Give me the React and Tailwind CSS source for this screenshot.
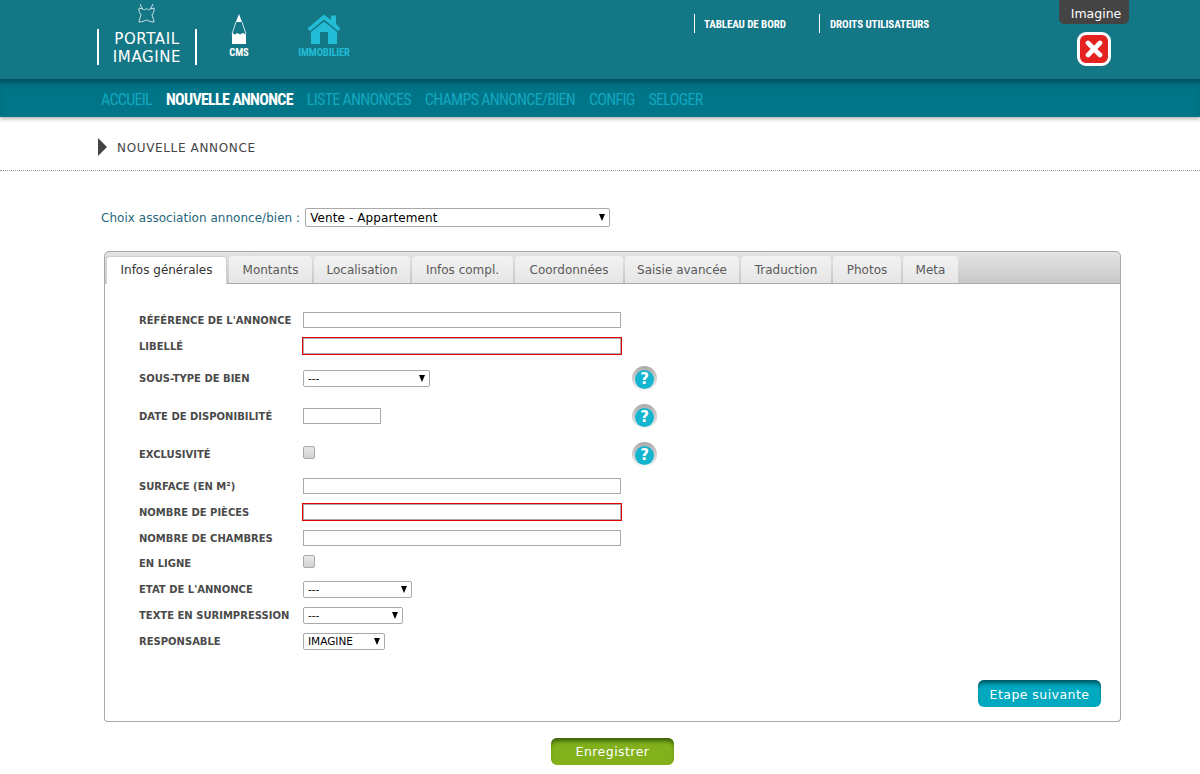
const verdana = "font-['DejaVu_Sans','Liberation_Sans',sans-serif]";

const tabs = ["Infos générales", "Montants", "Localisation", "Infos compl.", "Coordonnées", "Saisie avancée", "Traduction", "Photos", "Meta"];
const tabWidths = ["w-[121px]", "w-[83px]", "w-[96px]", "w-[101px]", "w-[108px]", "w-[114px]", "w-[90px]", "w-[68px]", "w-[55px]"];
const navItems = ["ACCUEIL", "NOUVELLE ANNONCE", "LISTE ANNONCES", "CHAMPS ANNONCE/BIEN", "CONFIG", "SELOGER"];

function Arrow() {
  return <span className="ml-auto mr-[4px] text-[0] border-x-[3.5px] border-x-transparent border-t-[7px] border-t-black" />;
}

function SelectBox({ value, width, big }) {
  return (
    <div
      className={`flex items-center bg-white border border-[#a9a9a9] rounded-[2px] text-black ${width} ${
        big ? "h-[19px] pl-[4px] text-[12px] tracking-[0.1px]" : "h-[17px] pl-[4px] text-[10.5px]"
      }`}
    >
      <span className={big ? "" : "pt-[1px]"}>{value}</span>
      <Arrow />
    </div>
  );
}

function TextInput({ error, width = "w-[318px]" }) {
  if (error) {
    return <div className="w-[320px] h-[18px] -ml-px bg-white border border-[#e60000] shadow-[inset_0_0_0_1px_#a9a9a9]" />;
  }
  return <div className={`${width} h-[16px] bg-white border border-[#a9a9a9]`} />;
}

function Checkbox() {
  return <div className="w-[12px] h-[13px] -mt-[4px] rounded-[2px] border border-[#a8a8a8] bg-gradient-to-b from-[#e8e8e8] to-[#d2d2d2]" />;
}

function HelpIcon() {
  return (
    <div className="ml-auto w-[25px] h-[25px] rounded-full bg-gradient-to-b from-[#a8a8a8] to-[#f8f8f8] flex items-center justify-center">
      <div className="w-[19px] h-[19px] mt-[2px] rounded-full bg-[#15b5cf] flex items-center justify-center text-white text-[15px] font-bold leading-none">
        ?
      </div>
    </div>
  );
}

function Row({ label, height = "h-[26px]", help, children }) {
  return (
    <div className={`flex items-center ${height}`}>
      <div className="w-[164px] text-[10px] font-bold text-[#4a4a4a]">{label}</div>
      <div className="w-[318px]">{children}</div>
      {help && <div className="w-[36px] flex"><HelpIcon /></div>}
    </div>
  );
}

function Header() {
  return (
    <header className="relative h-[79px] bg-[#147786] pl-[97px] flex font-['Roboto',sans-serif]">
      <div className="w-[100px] pt-[3px] flex flex-col items-center">
        <svg width="20" height="22" viewBox="0 0 20 22" fill="none" stroke="#cfe3e6" strokeWidth="1">
          <path d="M3 1 L5.500 6 L2 5 C1 9 4 11 4 12 C3 15 2 17 2 19 C5 19 7 18 9.500 17 C12 18 14 19 17 19 C17 17 16 15 15 12 C15 11 18 9 17 5 L13.500 6 L16 1" />
          <path d="M5.500 6 C7 7 8 7 9.500 5.500 C11 7 12 7 13.500 6" />
        </svg>
        <div className="mt-[4px] pt-[1px] w-full h-[36px] border-x-2 border-white text-center text-white text-[15px] leading-[18px] tracking-[0.6px]">
          <div className={verdana}>PORTAIL</div>
          <div className={verdana}>IMAGINE</div>
        </div>
      </div>
      <div className="ml-[32px] w-[20px] pt-[14px] flex flex-col items-center">
        <svg width="16" height="31" viewBox="0 0 16 31">
          <path d="M8 0 L11 8 L4.800 8 Z" fill="#fff" />
          <path d="M5 8 L1 20 M11 8 L15 20" stroke="#fff" strokeWidth="0.8" fill="none" />
          <path d="M1 30 L1 19 L4 20.500 L6.500 19 L9 20.500 L12 19 L15 20.500 L15 30 Z" fill="#fff" />
        </svg>
        <span className="text-[10.5px] font-bold text-white tracking-[-0.1px] [font-stretch:75%]">CMS</span>
      </div>
      <div className="ml-[47px] w-[56px] pt-[14px] flex flex-col items-center">
        <svg width="34" height="31" viewBox="0 0 34 31" fill="#22bcd6">
          <path d="M0.500 14.500 L17 0.500 L24 6 L24 1.500 L29 1.500 L29 10 L33.500 14.500 L31 17 L17 5.500 L3 17 Z" />
          <path d="M4 18 L17 7.500 L30 18 L30 30 L21 30 L21 18 L13 18 L13 30 L4 30 Z" />
        </svg>
        <span className="text-[10.5px] font-bold text-[#22bcd6] tracking-[-0.1px] whitespace-nowrap [font-stretch:75%]">IMMOBILIER</span>
      </div>
      <div className="ml-[342px] mt-[14px] h-[19px] flex">
        <div className="w-[125px] border-l border-white pl-[9px] text-[11px] font-bold leading-[22px] text-white tracking-[-0.1px] whitespace-nowrap [font-stretch:75%]">
          TABLEAU DE BORD
        </div>
        <div className="border-l border-white pl-[10px] text-[11px] font-bold leading-[22px] text-white tracking-[-0.1px] whitespace-nowrap [font-stretch:75%]">
          DROITS UTILISATEURS
        </div>
      </div>
      <div className="absolute left-[1059px] top-0 w-[70px] flex flex-col items-center">
        <div className={`w-[70px] h-[24px] pl-[4px] bg-[#444444] rounded-b-[5px] text-white text-[12.5px] leading-[28px] text-center ${verdana}`}>
          Imagine
        </div>
        <div className="mt-[8px] w-[34px] h-[34px] rounded-[9px] bg-[#e42320] border-[3px] border-white flex items-center justify-center">
          <svg width="18" height="18" viewBox="0 0 18 18" stroke="#fff" strokeWidth="4.600" strokeLinecap="round">
            <path d="M3 3 L15 15 M15 3 L3 15" />
          </svg>
        </div>
      </div>
    </header>
  );
}

function Nav() {
  return (
    <nav className="h-[38px] pl-[101px] pt-[3px] bg-[#007587] flex items-center gap-[14px] shadow-[inset_0_7px_6px_-4px_rgba(0,50,60,0.65),0_2px_4px_rgba(0,0,0,0.3)] font-['Roboto',sans-serif] text-[16px] tracking-[-0.7px] [font-stretch:75%]">
      {navItems.map((item) => (
        <a key={item} className={item === "NOUVELLE ANNONCE" ? "text-white font-bold whitespace-nowrap" : "text-[#13a7c0] whitespace-nowrap"}>
          {item}
        </a>
      ))}
    </nav>
  );
}

export default function App() {
  return (
    <div className={`w-[1200px] h-[774px] overflow-hidden bg-white ${verdana}`}>
      <Header />
      <Nav />
      <div className="h-[54px] pl-[98px] flex items-center border-b border-dotted border-[#999999] pt-[6px]">
        <span className="border-y-[9px] border-y-transparent border-l-[9px] border-l-[#444444]" />
        <h1 className="ml-[10px] pt-[3px] text-[12px] text-[#444444] tracking-[0.65px] font-normal">NOUVELLE ANNONCE</h1>
      </div>

      <div className="mt-[37px] ml-[101px] flex items-center text-[12px] text-[#26667a] tracking-[0.03px]">
        <span className="mr-[5px]">Choix association annonce/bien :</span>
        <SelectBox value="Vente - Appartement" width="w-[305px]" big />
      </div>

      <section className="mt-[24px] ml-[104px] w-[1017px] h-[471px] flex flex-col">
        <div className="h-[33px] pl-[1px] pt-[4px] flex gap-[2px] rounded-t-[5px] border border-[#a9a9a9] bg-gradient-to-b from-[#e4e4e4] to-[#c8c8c8]">
          {tabs.map((tab, i) => (
            <div
              key={tab}
              className={`${tabWidths[i]} rounded-t-[4px] text-center text-[12px] whitespace-nowrap ${
                i === 0
                  ? "h-[28px] leading-[26px] bg-white text-[#333333] border border-b-0 border-[#d0d0d0]"
                  : "h-[27px] leading-[28px] bg-gradient-to-b from-[#f2f2f2] to-[#e6e6e6] text-[#5a5a5a]"
              }`}
            >
              {tab}
            </div>
          ))}
        </div>
        <div className="flex-1 relative border border-t-0 border-[#a9a9a9] rounded-b-[4px] pl-[34px] pt-[23px]">
          <Row label="RÉFÉRENCE DE L'ANNONCE"><TextInput /></Row>
          <Row label="LIBELLÉ"><TextInput error /></Row>
          <Row label="SOUS-TYPE DE BIEN" height="h-[38px]" help><SelectBox value="---" width="w-[127px]" /></Row>
          <Row label="DATE DE DISPONIBILITÉ" height="h-[38px]" help><TextInput width="w-[78px]" /></Row>
          <Row label="EXCLUSIVITÉ" height="h-[38px]" help><Checkbox /></Row>
          <Row label="SURFACE (EN M²)"><TextInput /></Row>
          <Row label="NOMBRE DE PIÈCES"><TextInput error /></Row>
          <Row label="NOMBRE DE CHAMBRES"><TextInput /></Row>
          <Row label="EN LIGNE" height="h-[25px]"><Checkbox /></Row>
          <Row label="ETAT DE L'ANNONCE"><SelectBox value="---" width="w-[109px]" /></Row>
          <Row label="TEXTE EN SURIMPRESSION"><SelectBox value="---" width="w-[100px]" /></Row>
          <Row label="RESPONSABLE"><SelectBox value="IMAGINE" width="w-[82px]" /></Row>
          <button className="absolute right-[19px] bottom-[14px] w-[123px] h-[27px] pt-[3px] rounded-[6px] bg-[#00a9c0] shadow-[inset_0_5px_4px_-2px_rgba(0,60,70,0.8)] text-white text-[12.5px] tracking-[0.45px]">
            Etape suivante
          </button>
        </div>
      </section>

      <div className="mt-[16px] flex justify-center">
        <button className="w-[123px] h-[27px] ml-[25px] pt-[2px] rounded-[6px] bg-[#83b11c] shadow-[inset_0_5px_4px_-2px_rgba(30,70,0,0.8)] text-white text-[12.5px] tracking-[0.45px]">
          Enregistrer
        </button>
      </div>
    </div>
  );
}
